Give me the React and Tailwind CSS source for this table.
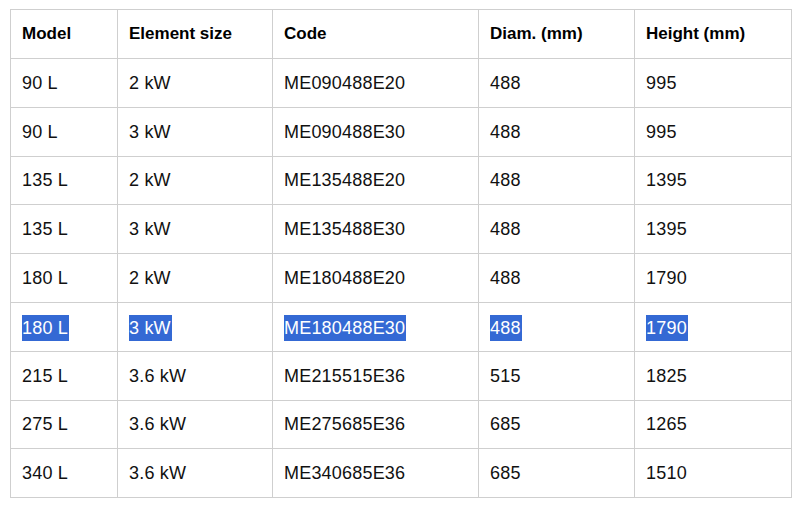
const rows = [
  ["90 L", "2 kW", "ME090488E20", "488", "995"],
  ["90 L", "3 kW", "ME090488E30", "488", "995"],
  ["135 L", "2 kW", "ME135488E20", "488", "1395"],
  ["135 L", "3 kW", "ME135488E30", "488", "1395"],
  ["180 L", "2 kW", "ME180488E20", "488", "1790"],
  ["180 L", "3 kW", "ME180488E30", "488", "1790"],
  ["215 L", "3.6 kW", "ME215515E36", "515", "1825"],
  ["275 L", "3.6 kW", "ME275685E36", "685", "1265"],
  ["340 L", "3.6 kW", "ME340685E36", "685", "1510"],
];

const headers = ["Model", "Element size", "Code", "Diam. (mm)", "Height (mm)"];

export default function App() {
  return (
    <div
      className="bg-white w-[800px] h-[509px] pt-[9px] pl-[10px] text-[#111]"
      style={{ fontFamily: '"Liberation Sans", Arial, sans-serif' }}
    >
      <table className="table-fixed border-collapse w-[781px] text-[18px] leading-[26px]">
        <colgroup>
          <col className="w-[107px]" />
          <col className="w-[155px]" />
          <col className="w-[206px]" />
          <col className="w-[156px]" />
          <col className="w-[157px]" />
        </colgroup>
        <thead>
          <tr className="h-[49px]">
            {headers.map((h) => (
              <th
                key={h}
                className="border border-[#cfcfcf] px-[11px] text-left text-[17px] font-bold text-black"
              >
                {h}
              </th>
            ))}
          </tr>
        </thead>
        <tbody>
          {rows.map((r, i) => (
            <tr key={i} className="h-[48.8px]">
              {r.map((c, j) => (
                <td key={j} className="border border-[#cfcfcf] px-[11px] tracking-[0.2px]">
                  {i === 5 ? (
                    <span className="inline-block align-middle leading-[26px] bg-[#3469d4] text-white pr-[1px]">
                      {c}
                    </span>
                  ) : (
                    c
                  )}
                </td>
              ))}
            </tr>
          ))}
        </tbody>
      </table>
    </div>
  );
}
